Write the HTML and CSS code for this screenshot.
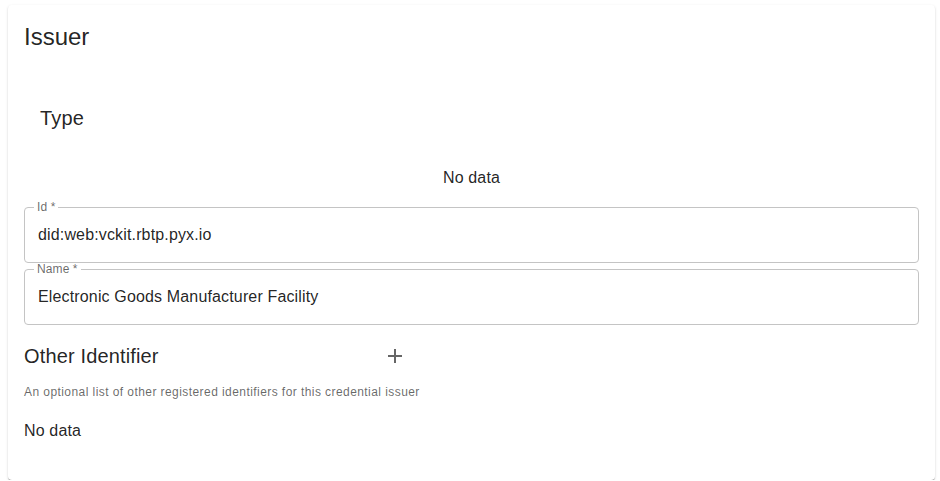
FILE: index.html
```html
<!DOCTYPE html>
<html lang="en">
<head>
<meta charset="utf-8">
<title>Issuer</title>
<link rel="stylesheet" href="styles.css">
</head>
<body>
<section class="card">
  <h2 class="card-title">Issuer</h2>
  <h3 class="sub-title">Type</h3>
  <p class="empty empty-center">No data</p>

  <fieldset class="field">
    <legend class="field-label">Id *</legend>
    <div class="field-value">did:web:vckit.rbtp.pyx.io</div>
  </fieldset>
  <fieldset class="field field-next">
    <legend class="field-label">Name *</legend>
    <div class="field-value">Electronic Goods Manufacturer Facility</div>
  </fieldset>

  <div class="section-head">
    <h3 class="section-title">Other Identifier</h3>
    <button class="icon-button" type="button" aria-label="Add">
      <svg viewBox="0 0 24 24" width="24" height="24" aria-hidden="true"><path d="M19 13h-6v6h-2v-6H5v-2h6V5h2v6h6v2z"/></svg>
    </button>
  </div>
  <p class="caption">An optional list of other registered identifiers for this credential issuer</p>
  <p class="empty">No data</p>
</section>
</body>
</html>
```
FILE: styles.css
```css
html, body {
  margin: 0;
  padding: 0;
  background: #ffffff;
}

body {
  font-family: "Liberation Sans", Arial, Helvetica, sans-serif;
  color: rgba(0, 0, 0, 0.87);
}

.card {
  margin: 5px 5px 0 8px;
  padding: 16px 16px 37px;
  background: #ffffff;
  border-radius: 4px;
  box-shadow: 0 2px 1px -1px rgba(0, 0, 0, 0.3),
              0 1px 1px 0 rgba(0, 0, 0, 0.18),
              0 1px 3px 0 rgba(0, 0, 0, 0.12);
}

.card-title {
  margin: 0;
  font-size: 24px;
  line-height: 32px;
  font-weight: 400;
}

.sub-title {
  margin: 49px 0 0;
  padding-left: 16px;
  font-size: 20px;
  line-height: 32px;
  font-weight: 400;
  letter-spacing: 0.15px;
}

.empty {
  margin: 17px 0 0;
  font-size: 16px;
  line-height: 24px;
  letter-spacing: 0.15px;
}

.empty-center {
  margin-top: 32px;
  text-align: center;
}

.field {
  margin: 12px 0 0;
  padding: 10px 13px 15px;
  min-width: 0;
  border: 1px solid #c4c4c4;
  border-radius: 4px;
}

.field-next {
  margin-top: 1px;
}

.field-label {
  margin-left: -4px;
  padding: 0 3px;
  font-size: 12px;
  line-height: 11px;
  color: rgba(0, 0, 0, 0.6);
  letter-spacing: 0.1px;
}

.field-value {
  font-size: 16px;
  line-height: 24px;
  letter-spacing: 0.15px;
}

.section-head {
  display: flex;
  align-items: center;
  margin-top: 11px;
}

.section-title {
  width: 351px;
  margin: 0;
  font-size: 20px;
  line-height: 32px;
  font-weight: 400;
  letter-spacing: 0.15px;
}

.icon-button {
  display: flex;
  align-items: center;
  justify-content: center;
  width: 40px;
  height: 40px;
  padding: 8px;
  border: 0;
  border-radius: 50%;
  background: transparent;
  color: rgba(0, 0, 0, 0.6);
}

.icon-button svg {
  fill: currentColor;
}

.caption {
  margin: 6px 0 0;
  font-size: 12px;
  line-height: 20px;
  letter-spacing: 0.43px;
  color: rgba(0, 0, 0, 0.6);
}
```
